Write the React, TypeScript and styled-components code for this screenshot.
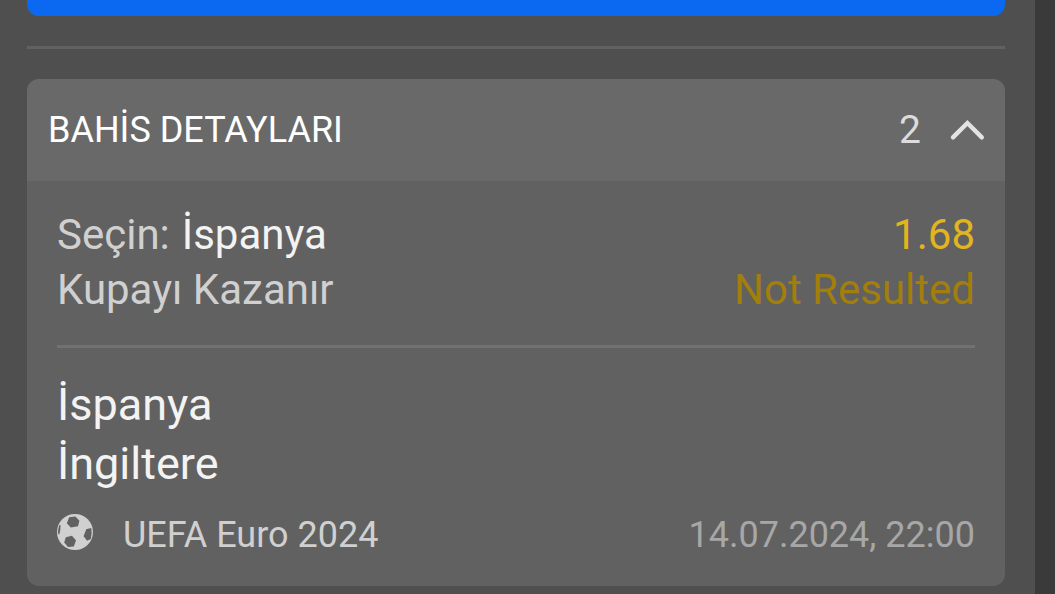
import { createGlobalStyle, styled } from "styled-components";

const App = () => {
  return (
    <>
      <GlobalStyle />
      <Page>
        <Panel>
          <BlueButton />
          <Separator />
          <Card>
            <CardHeader>
              <Title>BAHİS DETAYLARI</Title>
              <Count>2</Count>
              <Chevron viewBox="0 0 36 24">
                <path d="M4 19.4 L18.4 5 L32.8 19.4" />
              </Chevron>
            </CardHeader>
            <CardBody>
              <Row>
                <Label>
                  Seçin: <Pick>İspanya</Pick>
                </Label>
                <Odds>1.68</Odds>
              </Row>
              <Row>
                <Label>Kupayı Kazanır</Label>
                <Status>Not Resulted</Status>
              </Row>
              <Divider />
              <Team>İspanya</Team>
              <Team>İngiltere</Team>
              <Footer>
                <Ball viewBox="0 0 36 36">
                  <circle cx="18" cy="18" r="18" />
                  <path d="M12.2 3.2 L18.4 2.6 L22.4 6.8 L21 12.2 L13.8 13.6 L9.8 9.2Z" />
                  <path d="M29.2 15.2 L34.2 14 Q35.4 19 33.8 25 L30 26.8 L26.6 22.2Z" />
                  <path d="M8.8 23.2 L15 21.8 L19 26.6 L16.8 32.4 L11 33 L7.2 28.6Z" />
                  <path d="M2.4 11 L3.6 11.2 L3.2 16.8 L2.2 20.6 L1 19.6 Q0.8 15 2.4 11Z" />
                </Ball>
                <League>UEFA Euro 2024</League>
                <DateText>14.07.2024, 22:00</DateText>
              </Footer>
            </CardBody>
          </Card>
        </Panel>
      </Page>
    </>
  );
};

export default App;

const GlobalStyle = createGlobalStyle`
  * {
    box-sizing: border-box;
  }
  body {
    margin: 0;
    background: #3a3a3a;
    font-family: Roboto, sans-serif;
  }
`;
const Page = styled.div`
  width: 100%;
  height: 100vh;
  overflow: hidden;
`;
const Panel = styled.div`
  width: 1035px;
  height: 100%;
  padding: 0 30px 0 27px;
  background: #4f4f4f;
`;
const BlueButton = styled.div`
  height: 16px;
  background: #0a69f0;
  border-radius: 0 0 12px 12px;
`;
const Separator = styled.div`
  height: 3px;
  margin: 30px 0;
  background: #616161;
`;
const Card = styled.div`
  height: 507px;
  border-radius: 12px;
  background: #616161;
  overflow: hidden;
`;
const CardHeader = styled.div`
  display: flex;
  align-items: center;
  height: 102px;
  padding: 0 20px 0 21px;
  background: #696969;
`;
const Title = styled.div`
  flex: 1;
  color: #ffffff;
  font-size: 36px;
`;
const Count = styled.div`
  color: #dcdcdc;
  font-size: 39px;
`;
const Chevron = styled.svg`
  width: 36px;
  height: 24px;
  margin-left: 28px;
  fill: none;
  stroke: #e3e3e3;
  stroke-width: 4.4;
  stroke-linecap: round;
`;
const CardBody = styled.div`
  padding: 26px 30px 24px;
`;
const Row = styled.div`
  display: flex;
  justify-content: space-between;
  font-size: 42px;
  line-height: 55px;
`;
const Label = styled.div`
  color: #d0d0d0;
`;
const Pick = styled.span`
  margin-left: 1.5px;
  color: #f3f3f3;
`;
const Odds = styled.div`
  color: #e2b520;
`;
const Status = styled.div`
  color: #a27e0c;
`;
const Divider = styled.div`
  height: 3px;
  margin: 28px 0 27px;
  background: #717171;
`;
const Team = styled.div`
  color: #f3f3f3;
  font-size: 45px;
  line-height: 59px;
`;
const Footer = styled.div`
  display: flex;
  align-items: center;
  height: 54px;
  margin-top: 15px;
  font-size: 36px;
`;
const Ball = styled.svg`
  width: 36px;
  height: 36px;
  margin: 0 30px 6px 0;
  fill: #d0d0d0;

  path {
    fill: #616161;
  }
`;
const League = styled.div`
  flex: 1;
  color: #d0d0d0;
`;
const DateText = styled.div`
  color: #a7a7a7;
`;
